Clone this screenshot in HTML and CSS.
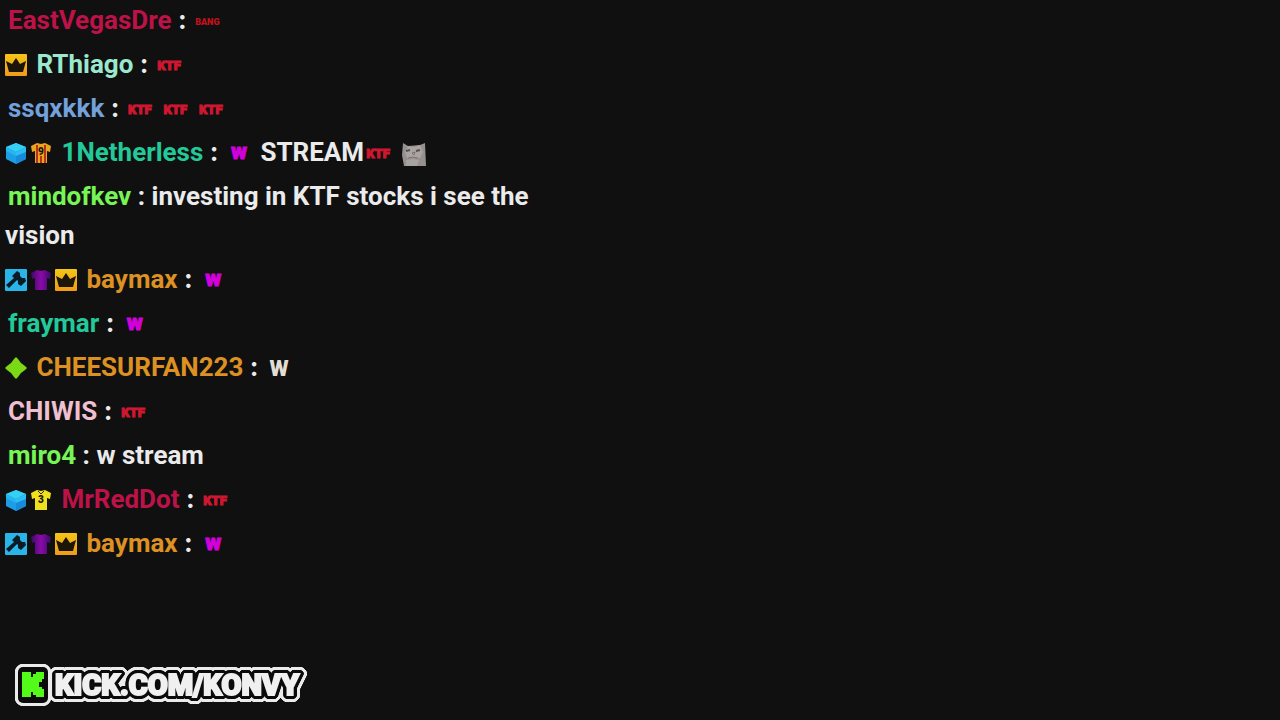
FILE: index.html
```
<!DOCTYPE html>
<html>
<head>
    <meta charset="utf-8">
    <title>Chat</title>
    <link rel="stylesheet" href="styles.css">
</head>
<body>
<svg class="defs" aria-hidden="true">
    <defs>
        <linearGradient id="gold" x1="0" y1="0" x2="0" y2="1"><stop offset="0" stop-color="#f5c518"/><stop offset="1" stop-color="#f09a1a"/></linearGradient>
        <linearGradient id="violet" x1="0" y1="0" x2="1" y2="0"><stop offset="0" stop-color="#3a0a68"/><stop offset=".5" stop-color="#8c0aa8"/><stop offset="1" stop-color="#3a0a68"/></linearGradient>
    </defs>
    <symbol id="crown" viewBox="0 0 22 22">
        <rect width="22" height="22" rx="1" fill="url(#gold)"/>
        <path d="M1 7l6 3 4-6 4 6 6-3-3 11H4z" fill="#1c1608"/>
    </symbol>
    <symbol id="hammer" viewBox="0 0 22 22">
        <rect width="22" height="22" rx="1" fill="#29b5e8"/>
        <path d="M7 7l5-5 3 2v3l2 2h3l1 3-5 5-3-2v-3l-1-1-8 8-3-3 8-7-1-1z" fill="#0c1c26"/>
    </symbol>
    <symbol id="cube" viewBox="0 0 22 22">
        <path d="M1 5l10-4 10 4v12l-10 5-10-5z" fill="#1c9ee6"/>
        <path d="M1 5l10-4 10 4-10 5z" fill="#35d0f4"/>
        <path d="M11 10l10-5v12l-10 5z" fill="#168bdc"/>
        <path d="M11 10l10-5v5l-10 4z" fill="#2ebdf0"/>
        <path d="M1 5l10 5v4L1 9z" fill="#28b4ee"/>
    </symbol>
    <symbol id="shirt" viewBox="0 0 22 22">
        <path d="M7 1l4 1 4-1 6 3-1 6-3-1v12H5V9L2 10 1 4z"/>
    </symbol>
    <symbol id="diamond" viewBox="0 0 22 22">
        <path d="M11 0l2 2 3 4 4 3 2 2-2 2-4 3-3 4-2 2-2-2-3-4-4-3-2-2 2-2 4-3 3-4z" fill="#7bd814"/>
    </symbol>
    <symbol id="cat" viewBox="0 0 24 24">
        <path d="M1 1l5 3 12-1 5-2 1 23H2L0 13z" fill="#96918f"/>
        <path d="M6 4l6 1 6-2 3 7-3 6H5L3 10z" fill="#aaa5a3"/>
        <path d="M4 9l4-1M14 9l4-1" stroke="#55504e" stroke-width="2"/>
        <path d="M10 11l3-1-1 3zM6 16l5-1 5 1" fill="none" stroke="#7c7270" stroke-width="1"/>
        <path d="M4 18l7-1 6 1-2 6H4z" fill="#a8a3a0"/>
    </symbol>
</svg>

<main class="chat">
    <p class="message"><span class="name crimson">EastVegasDre</span> <span class="colon">:</span> <span class="emote bang">BANG</span></p>
    <p class="message"><svg class="badge"><use href="#crown"/></svg> <span class="name mint">RThiago</span> <span class="colon">:</span> <span class="emote ktf">KTF</span></p>
    <p class="message"><span class="name blue">ssqxkkk</span> <span class="colon">:</span> <span class="emote ktf">KTF</span> <span class="emote ktf">KTF</span> <span class="emote ktf">KTF</span></p>
    <p class="message"><svg class="badge"><use href="#cube"/></svg><svg class="badge" viewBox="0 0 22 22"><use href="#shirt" fill="#eda51f"/><path d="M7 3v18M15 3v18M11 14v7" stroke="#b5321c" stroke-width="2"/><text class="number" x="8" y="13">9</text></svg> <span class="name teal">1Netherless</span> <span class="colon">:</span> <span class="emote dub">w</span> STREAM<span class="emote ktf">KTF</span> <svg class="emote" role="img" aria-label="cat"><use href="#cat"/></svg></p>
    <p class="message"><span class="name green">mindofkev</span> : investing in KTF stocks i see the vision</p>
    <p class="message"><svg class="badge"><use href="#hammer"/></svg><svg class="badge"><use href="#shirt" fill="url(#violet)"/></svg><svg class="badge"><use href="#crown"/></svg> <span class="name orange">baymax</span> <span class="colon">:</span> <span class="emote dub">w</span></p>
    <p class="message"><span class="name teal">fraymar</span> <span class="colon">:</span> <span class="emote dub">w</span></p>
    <p class="message"><svg class="badge"><use href="#diamond"/></svg> <span class="name orange">CHEESURFAN223</span> <span class="colon">:</span> <span class="emote white">W</span></p>
    <p class="message"><span class="name pink">CHIWIS</span> <span class="colon">:</span> <span class="emote ktf">KTF</span></p>
    <p class="message"><span class="name green">miro4</span> : w stream</p>
    <p class="message"><svg class="badge"><use href="#cube"/></svg><svg class="badge" viewBox="0 0 22 22"><use href="#shirt" fill="#eee01e"/><path d="M8 2l3 3 3-3" fill="none" stroke="#2c2a10"/><text class="number" x="8" y="14">3</text></svg> <span class="name crimson">MrRedDot</span> <span class="colon">:</span> <span class="emote ktf">KTF</span></p>
    <p class="message"><svg class="badge"><use href="#hammer"/></svg><svg class="badge"><use href="#shirt" fill="url(#violet)"/></svg><svg class="badge"><use href="#crown"/></svg> <span class="name orange">baymax</span> <span class="colon">:</span> <span class="emote dub">w</span></p>
</main>

<footer class="footer">
    <a class="brand" href="#">
        <svg class="logo" viewBox="0 0 30 36">
            <rect width="30" height="36" rx="5" fill="#0b0b0b"/>
            <path d="M4 5h9v5h2V7h3V5h8v7h-2v3h-3v5h3v2h2v8h-8v-2h-3v-3h-2v5H4z" fill="#53fc18"/>
        </svg>
        <span class="address">KICK.COM/KONVY</span>
    </a>
</footer>
</body>
</html>
```

FILE: styles.css
```
*{margin: 0;padding: 0;box-sizing: border-box;}
body{min-height: 100vh;display: flex;flex-direction: column;justify-content: space-between;background: #101010;color: #ebebeb;font-family: Roboto, "Liberation Sans", sans-serif;}
.defs{position: absolute;width: 0;height: 0;}

.chat{width: 100%;max-width: 560px;padding: 1px 5px;display: flex;flex-direction: column;gap: 5px;}
.message{font-size: 26px;font-weight: 700;line-height: 39px;}
.name{margin-left: 3px;}
.badge + .name{margin-left: 0;}
.colon{font-family: Inter, sans-serif;line-height: 24px;}
.badge{width: 22px;height: 22px;margin-right: 3px;vertical-align: -3px;}
.number{font-size: 10px;font-weight: 900;fill: #1c1408;}

.emote{display: inline-block;width: 24px;height: 24px;margin: 0 3px 0 2px;line-height: 24px;text-align: center;vertical-align: middle;}
.ktf{color: #cf1730;font-size: 13px;font-weight: 900;-webkit-text-stroke: 1px #cf1730;}
.bang{color: #c4101c;font-size: 9px;font-weight: 900;}
.dub{color: #d400dc;font-size: 22px;font-weight: 900;line-height: 20px;-webkit-text-stroke: 1px #d400dc;}
.white{color: #e2ded4;font-size: 22px;font-weight: 900;}

.crimson{color: #bd1248;}
.mint{color: #9be8cf;}
.blue{color: #72a1dc;}
.teal{color: #23c999;}
.green{color: #78f556;}
.orange{color: #dd9122;}
.pink{color: #eec0d0;}

.footer{padding: 0 18px 13px;}
.brand{display: inline-flex;align-items: center;gap: 7px;color: #f0f0f0;text-decoration: none;filter: drop-shadow(1px 1px #ebebeb) drop-shadow(-1px -1px #ebebeb) drop-shadow(1px -1px #ebebeb) drop-shadow(-1px 1px #ebebeb) drop-shadow(1px 0 #ebebeb) drop-shadow(-1px 0 #ebebeb) drop-shadow(0 1px #ebebeb) drop-shadow(0 -1px #ebebeb);}
.logo{width: 30px;height: 36px;}
.address{font-size: 29px;font-weight: 900;line-height: 34px;-webkit-text-stroke: 2px #f0f0f0;filter: drop-shadow(1px 1px #0b0b0b) drop-shadow(-1px -1px #0b0b0b) drop-shadow(1px -1px #0b0b0b) drop-shadow(-1px 1px #0b0b0b) drop-shadow(1px 0 #0b0b0b) drop-shadow(-1px 0 #0b0b0b) drop-shadow(0 1px #0b0b0b) drop-shadow(0 -1px #0b0b0b);}
```
